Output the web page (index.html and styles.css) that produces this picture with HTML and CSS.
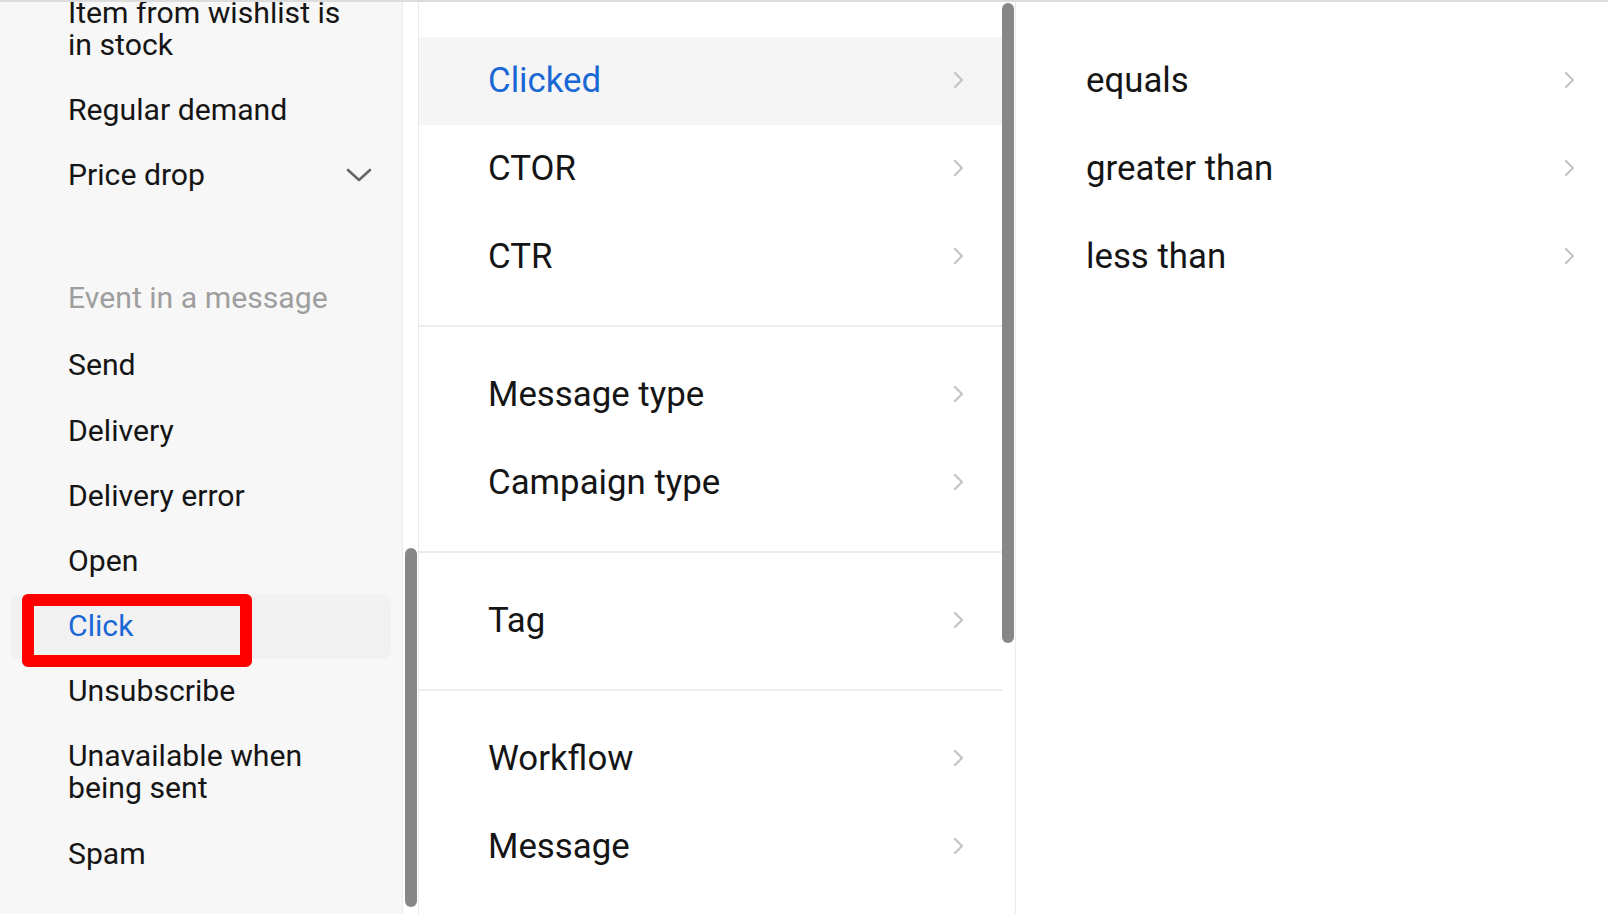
FILE: index.html
```html
<!DOCTYPE html>
<html lang="en">
<head>
<meta charset="utf-8">
<title>Condition picker</title>
<link rel="stylesheet" href="styles.css">
</head>
<body>
<div class="app">
  <aside class="left">
    <div class="left-list">
      <div class="group">
        <div class="item"><span class="label">Item from wishlist is in stock</span></div>
        <div class="item"><span class="label">Regular demand</span></div>
        <div class="item item-expand"><span class="label">Price drop</span>
          <svg class="chev-down" width="26" height="14" viewBox="0 0 26 14"><path d="M2 2 L13 12 L24 2" fill="none" stroke="#666" stroke-width="2.6" stroke-linecap="round" stroke-linejoin="round"/></svg>
        </div>
      </div>
      <div class="group group-events">
        <div class="item item-header"><span class="label">Event in a message</span></div>
        <div class="item"><span class="label">Send</span></div>
        <div class="item"><span class="label">Delivery</span></div>
        <div class="item"><span class="label">Delivery error</span></div>
        <div class="item"><span class="label">Open</span></div>
        <div class="item item-active"><span class="label">Click</span></div>
        <div class="item"><span class="label">Unsubscribe</span></div>
        <div class="item"><span class="label">Unavailable when being sent</span></div>
        <div class="item"><span class="label">Spam</span></div>
      </div>
    </div>
  </aside>
  <div class="left-track"><div class="thumb left-thumb"></div></div>

  <section class="mid">
    <div class="mid-content">
      <div class="section section-first">
        <div class="row row-active"><span>Clicked</span><svg class="chev" width="11" height="18" viewBox="0 0 11 18"><path d="M2 2 L9 9 L2 16" fill="none" stroke="#c4c4c4" stroke-width="2.2" stroke-linecap="round" stroke-linejoin="round"/></svg></div>
        <div class="row"><span>CTOR</span><svg class="chev" width="11" height="18" viewBox="0 0 11 18"><path d="M2 2 L9 9 L2 16" fill="none" stroke="#c4c4c4" stroke-width="2.2" stroke-linecap="round" stroke-linejoin="round"/></svg></div>
        <div class="row"><span>CTR</span><svg class="chev" width="11" height="18" viewBox="0 0 11 18"><path d="M2 2 L9 9 L2 16" fill="none" stroke="#c4c4c4" stroke-width="2.2" stroke-linecap="round" stroke-linejoin="round"/></svg></div>
      </div>
      <div class="section">
        <div class="row"><span>Message type</span><svg class="chev" width="11" height="18" viewBox="0 0 11 18"><path d="M2 2 L9 9 L2 16" fill="none" stroke="#c4c4c4" stroke-width="2.2" stroke-linecap="round" stroke-linejoin="round"/></svg></div>
        <div class="row"><span>Campaign type</span><svg class="chev" width="11" height="18" viewBox="0 0 11 18"><path d="M2 2 L9 9 L2 16" fill="none" stroke="#c4c4c4" stroke-width="2.2" stroke-linecap="round" stroke-linejoin="round"/></svg></div>
      </div>
      <div class="section">
        <div class="row"><span>Tag</span><svg class="chev" width="11" height="18" viewBox="0 0 11 18"><path d="M2 2 L9 9 L2 16" fill="none" stroke="#c4c4c4" stroke-width="2.2" stroke-linecap="round" stroke-linejoin="round"/></svg></div>
      </div>
      <div class="section section-last">
        <div class="row"><span>Workflow</span><svg class="chev" width="11" height="18" viewBox="0 0 11 18"><path d="M2 2 L9 9 L2 16" fill="none" stroke="#c4c4c4" stroke-width="2.2" stroke-linecap="round" stroke-linejoin="round"/></svg></div>
        <div class="row"><span>Message</span><svg class="chev" width="11" height="18" viewBox="0 0 11 18"><path d="M2 2 L9 9 L2 16" fill="none" stroke="#c4c4c4" stroke-width="2.2" stroke-linecap="round" stroke-linejoin="round"/></svg></div>
      </div>
    </div>
    <div class="mid-track"><div class="thumb mid-thumb"></div></div>
  </section>

  <section class="right">
    <div class="row row-right"><span>equals</span><svg class="chev" width="11" height="18" viewBox="0 0 11 18"><path d="M2 2 L9 9 L2 16" fill="none" stroke="#c4c4c4" stroke-width="2.2" stroke-linecap="round" stroke-linejoin="round"/></svg></div>
    <div class="row row-right"><span>greater than</span><svg class="chev" width="11" height="18" viewBox="0 0 11 18"><path d="M2 2 L9 9 L2 16" fill="none" stroke="#c4c4c4" stroke-width="2.2" stroke-linecap="round" stroke-linejoin="round"/></svg></div>
    <div class="row row-right"><span>less than</span><svg class="chev" width="11" height="18" viewBox="0 0 11 18"><path d="M2 2 L9 9 L2 16" fill="none" stroke="#c4c4c4" stroke-width="2.2" stroke-linecap="round" stroke-linejoin="round"/></svg></div>
  </section>

  <div class="annotation"></div>
</div>
</body>
</html>
```

FILE: styles.css
```css
* { box-sizing: border-box; }

html, body {
  margin: 0;
  padding: 0;
  height: 100%;
}

body {
  font-family: Roboto, "Noto Sans", "Liberation Sans", sans-serif;
  color: #151515;
  background: #ffffff;
  overflow: hidden;
}

.app {
  position: relative;
  display: flex;
  height: 914px;
  border-top: 2px solid #dcdcdc;
}

/* ---------- left column ---------- */
.left {
  width: 403px;
  flex: none;
  background: #f7f7f7;
  border-right: 1px solid #ececec;
  overflow: hidden;
}

.left-list {
  margin-top: -22px;
}

.group-events {
  margin-top: 58px;
}

.item {
  display: flex;
  align-items: center;
  justify-content: space-between;
  margin: 0 11px 0 10px;
  padding: 16.6px 19px 16.6px 58px;
  font-size: 30.2px;
  line-height: 32px;
  border-radius: 8px;
}

.item .label {
  max-width: 292px;
}

.item-header {
  color: #9e9e9e;
  padding-bottom: 18.6px;
}

.item-active {
  background: #f1f1f1;
  color: #1a67d6;
}

.chev-down {
  flex: none;
  display: block;
}

.left-track {
  width: 15px;
  flex: none;
  background: #ffffff;
  padding-top: 546px;
}

.thumb {
  width: 12px;
  border-radius: 6px;
  background: #878787;
}

.left-thumb {
  margin-left: 2px;
  height: 359px;
}

/* ---------- middle column ---------- */
.mid {
  width: 597px;
  flex: none;
  display: flex;
  border-left: 1px solid #e9e9e9;
}

.mid-content {
  flex: 1;
}

.section {
  padding: 24px 0;
  border-bottom: 2px solid #ececec;
}

.section-first {
  padding-top: 35px;
}

.section-last {
  border-bottom: none;
}

.row {
  height: 88px;
  display: flex;
  align-items: center;
  justify-content: space-between;
  padding: 0 38px 0 69px;
  font-size: 34.8px;
  line-height: 40px;
}

.row span {
  padding-bottom: 3px;
}

.row-active {
  background: #f5f5f5;
  color: #1a67d6;
}

.chev {
  display: block;
  flex: none;
  margin-bottom: 2px;
}

.mid-track {
  width: 13px;
  flex: none;
  padding-top: 1px;
}

.mid-thumb {
  height: 640px;
}

/* ---------- right column ---------- */
.right {
  flex: 1;
  border-left: 1px solid #ececec;
  padding-top: 35px;
}

.row-right {
  padding: 0 33px 0 70px;
}

/* ---------- annotation overlay ---------- */
.annotation {
  position: absolute;
  left: 22px;
  top: 592px;
  width: 230px;
  height: 73px;
  border: 12px solid #ff0000;
  border-radius: 6px;
}
```
